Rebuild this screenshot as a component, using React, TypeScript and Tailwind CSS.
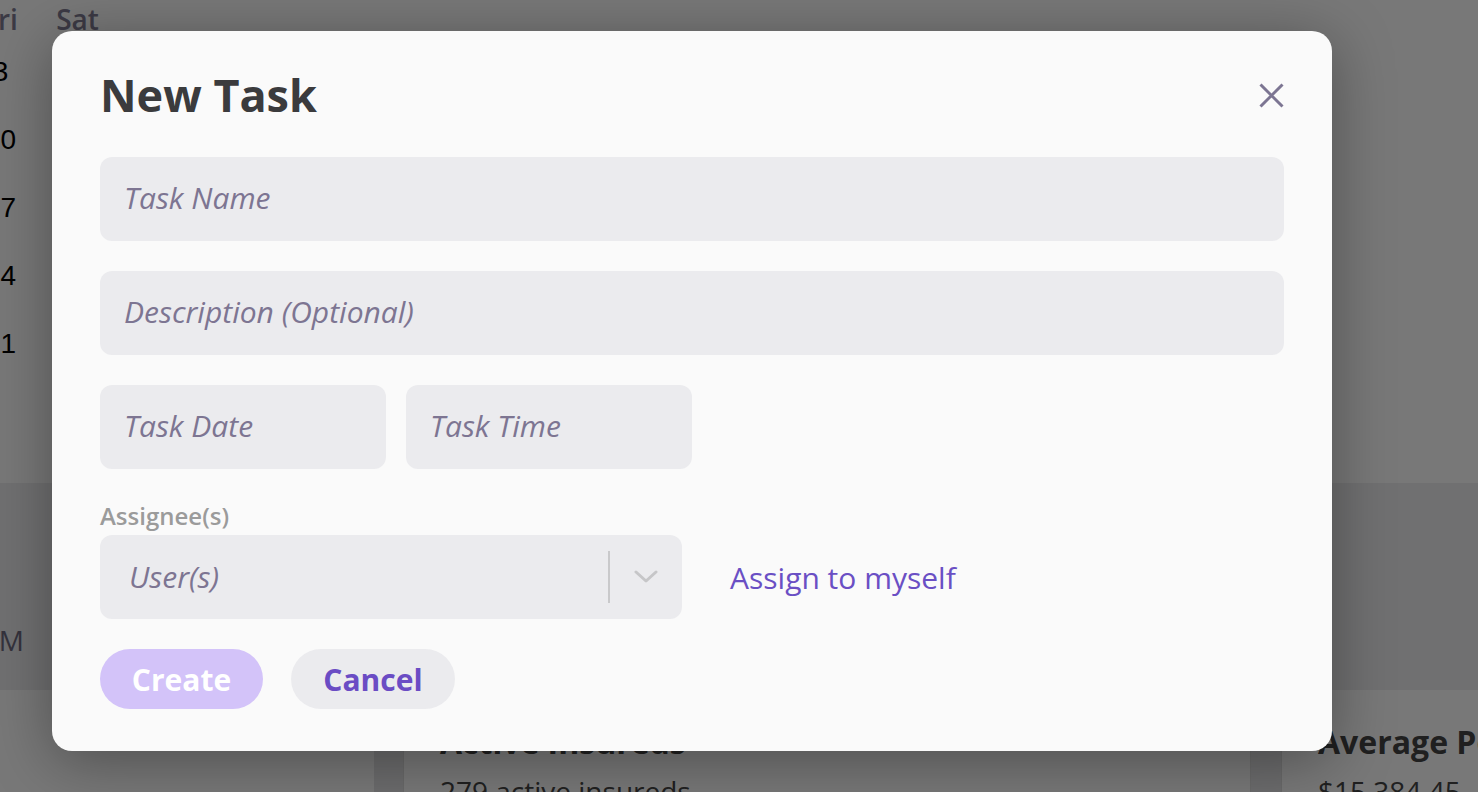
import React from "react";

const font = { fontFamily: '"Open Sans", "Noto Sans", sans-serif' };

function CalendarColumn({ head, nums }: { head: string; nums: string[] }) {
  return (
    <div className="flex w-[77px] shrink-0 flex-col items-center">
      <div className="flex h-[38px] items-center text-[28px] font-semibold text-[#807c92]">{head}</div>
      {nums.map((n) => (
        <div
          key={n}
          className="flex h-[68px] items-center text-[28px] text-black"
          style={{ fontFamily: '"Liberation Sans", Arial, sans-serif' }}
        >
          {n}
        </div>
      ))}
    </div>
  );
}

const inputCls =
  "h-[84px] rounded-[12px] bg-[#ebebee] px-[24px] pb-[4px] text-[30px] italic text-[#3b3b3d] outline-none placeholder:text-[#7d7592]";

export default function App() {
  return (
    <div className="relative h-[792px] w-[1478px] overflow-hidden bg-white" style={font}>
      {/* Background page */}
      <div className="flex h-[483px] flex-col bg-white">
        <div className="-ml-[38px] flex">
          <CalendarColumn head="Fri" nums={["3", "10", "17", "24", "31"]} />
          <CalendarColumn head="Sat" nums={["4", "11", "18", "25", "1"]} />
        </div>
      </div>
      <div className="flex h-[207px] flex-col bg-[#eeeef0]">
        <div className="mt-[138px] flex">
          <div className="-ml-[200px] w-[224px] shrink-0 text-right text-[28px] leading-[38px] text-[#6f6b80]">9:00 AM</div>
        </div>
      </div>
      <div className="flex h-[102px] bg-[#eeeef0]">
        <div className="w-[374px] shrink-0 bg-white" />
        <div className="w-[29px] shrink-0 bg-[#e6e6e8]" />
        <div className="w-[848px] shrink-0 border-x border-[#e0e0e0] bg-white pl-[36px] pt-[30px]">
          <div className="whitespace-nowrap text-[32px] font-bold leading-[44px] text-[#444]">Active Insureds</div>
          <div className="mt-[8px] whitespace-nowrap text-[28px] leading-[38px] text-[#444]">279 active insureds</div>
        </div>
        <div className="w-[30px] shrink-0 bg-[#e6e6e8]" />
        <div className="min-w-0 flex-1 overflow-hidden border-l border-[#e0e0e0] bg-white pl-[36px] pt-[30px]">
          <div className="whitespace-nowrap text-[32px] font-bold leading-[44px] text-[#444]">Average Policy Premium</div>
          <div className="mt-[8px] whitespace-nowrap text-[28px] leading-[38px] text-[#444]">$15,384.45</div>
        </div>
      </div>

      {/* Overlay */}
      <div className="absolute inset-0 bg-black/[0.53]" />

      {/* Modal */}
      <div className="absolute left-[52px] top-[31px] flex h-[720px] w-[1280px] flex-col rounded-[20px] bg-[#fafafa] px-[48px] pt-[38px] shadow-[0_10px_60px_rgba(0,0,0,0.35)]">
        <div className="flex items-center justify-between">
          <h1 className="text-[45px] font-bold leading-[52px] text-[#3b3b3d]">New Task</h1>
          <button className="flex h-[25px] w-[25px] items-center justify-center" aria-label="Close">
            <svg width="25" height="25" viewBox="0 0 25 25" fill="none" stroke="#7c7592" strokeWidth="3">
              <path d="M1.5 1.5 L23.5 23.5 M23.5 1.5 L1.5 23.5" />
            </svg>
          </button>
        </div>

        <input className={`mt-[36px] w-full ${inputCls}`} placeholder="Task Name" />
        <input className={`mt-[30px] w-full ${inputCls}`} placeholder="Description (Optional)" />
        <div className="mt-[30px] flex gap-[20px]">
          <input className={`w-[286px] ${inputCls}`} placeholder="Task Date" />
          <input className={`w-[286px] ${inputCls}`} placeholder="Task Time" />
        </div>

        <div className="mt-[32px] text-[24px] font-semibold leading-[30px] text-[#9b9b9b]">Assignee(s)</div>
        <div className="mt-[4px] flex items-center">
          <div className="flex h-[84px] w-[582px] items-center rounded-[12px] bg-[#ebebee]">
            <div className="flex-1 pb-[2px] pl-[29px] text-[30px] italic text-[#7d7592]">User(s)</div>
            <div className="h-[52px] w-[2px] bg-[#c9c9cb]" />
            <div className="flex h-full w-[72px] items-center justify-center">
              <svg width="24" height="14" viewBox="0 0 24 14" fill="none" stroke="#c6c6c8" strokeWidth="3" strokeLinecap="round" strokeLinejoin="round">
                <path d="M2 2 L12 11 L22 2" />
              </svg>
            </div>
          </div>
          <button className="ml-[48px] text-[30px] text-[#6a4fc4]">Assign to myself</button>
        </div>

        <div className="mt-[30px] flex gap-[28px]">
          <button className="h-[60px] w-[163px] rounded-full bg-[#d3c3f9] text-[30px] font-bold text-white">Create</button>
          <button className="h-[60px] w-[164px] rounded-full bg-[#ebebee] text-[30px] font-bold text-[#6a4cc4]">Cancel</button>
        </div>
      </div>
    </div>
  );
}
